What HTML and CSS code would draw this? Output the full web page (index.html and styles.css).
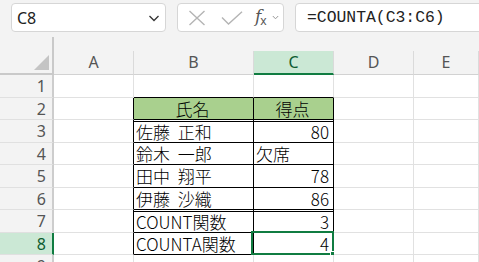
FILE: index.html
```html
<!DOCTYPE html>
<html lang="ja">
<head>
    <meta charset="UTF-8">
    <title>COUNTA</title>
    <link rel="stylesheet" href="styles.css">
</head>
<body>
    <div class="toolbar">
        <div class="namebox">
            <span>C8</span>
            <svg class="chev" width="12" height="8" viewBox="0 0 12 8"><path d="M1.5 2 L6 6.5 L10.5 2" fill="none" stroke="#333" stroke-width="1.3"/></svg>
        </div>
        <div class="fnbox">
            <svg width="18" height="16" viewBox="0 0 18 16"><path d="M1.5 1 L16.5 15 M16.5 1 L1.5 15" fill="none" stroke="#b4b4b4" stroke-width="1.4"/></svg>
            <svg width="22" height="14" viewBox="0 0 22 14"><path d="M1 6.5 L7.5 13 L21 0.8" fill="none" stroke="#b4b4b4" stroke-width="1.4"/></svg>
            <span class="fx"><i>f</i><sub>x</sub></span>
            <svg width="7" height="5" viewBox="0 0 7 5"><path d="M0.8 1 L3.5 3.8 L6.2 1" fill="none" stroke="#999" stroke-width="1"/></svg>
        </div>
        <div class="formula">=COUNTA(C3:C6)</div>
    </div>

    <div class="sheet">
        <div class="corner"></div>
        <div class="col"><span>A</span></div>
        <div class="col"><span>B</span></div>
        <div class="col col-sel"><span>C</span></div>
        <div class="col"><span>D</span></div>
        <div class="col"><span>E</span></div>

        <div class="rh">1</div>
        <div class="c"></div>
        <div class="c top"></div>
        <div class="c top"></div>
        <div class="c"></div>
        <div class="c"></div>

        <div class="rh">2</div>
        <div class="c edge"></div>
        <div class="c t head">氏名</div>
        <div class="c t head">得点</div>
        <div class="c"></div>
        <div class="c"></div>

        <div class="rh">3</div>
        <div class="c edge"></div>
        <div class="c t dbl">佐藤 正和</div>
        <div class="c t dbl num">80</div>
        <div class="c"></div>
        <div class="c"></div>

        <div class="rh">4</div>
        <div class="c edge"></div>
        <div class="c t">鈴木 一郎</div>
        <div class="c t">欠席</div>
        <div class="c"></div>
        <div class="c"></div>

        <div class="rh">5</div>
        <div class="c edge"></div>
        <div class="c t">田中 翔平</div>
        <div class="c t num">78</div>
        <div class="c"></div>
        <div class="c"></div>

        <div class="rh">6</div>
        <div class="c edge"></div>
        <div class="c t">伊藤 沙織</div>
        <div class="c t num">86</div>
        <div class="c"></div>
        <div class="c"></div>

        <div class="rh">7</div>
        <div class="c edge"></div>
        <div class="c t dbl">COUNT関数</div>
        <div class="c t dbl num">3</div>
        <div class="c"></div>
        <div class="c"></div>

        <div class="rh rh-sel">8</div>
        <div class="c edge"></div>
        <div class="c t">COUNTA関数</div>
        <div class="c t num active">4<span class="handle"></span></div>
        <div class="c"></div>
        <div class="c"></div>

        <div class="rh">9</div>
        <div class="c"></div>
        <div class="c"></div>
        <div class="c"></div>
        <div class="c"></div>
        <div class="c"></div>
    </div>
</body>
</html>
```

FILE: styles.css
```css
* {
    margin: 0;
    padding: 0;
    box-sizing: border-box;
}

body {
    background: #f3f3f3;
    font-family: 'Noto Sans', sans-serif;
    overflow: hidden;
    width: 479px;
    height: 262px;
}

/* formula bar */
.toolbar {
    display: flex;
    height: 37px;
    padding: 3px 0 0 11px;
}

.namebox,
.fnbox,
.formula {
    height: 29px;
    background: #fff;
    border: 1px solid #d6d6d6;
    border-radius: 4px;
}

.namebox {
    width: 155px;
    display: flex;
    align-items: center;
    justify-content: space-between;
    padding: 0 5px 0 5px;
    font-size: 16px;
    color: #222;
}

.fnbox {
    width: 107px;
    margin-left: 11px;
    display: flex;
    align-items: center;
    padding-left: 10px;
}

.fnbox svg:nth-child(2) {
    margin-left: 15px;
}

.fx {
    margin-left: 12px;
    font-family: 'DejaVu Serif', serif;
    color: #555;
    font-size: 17px;
    line-height: 1;
}

.fx sub {
    font-family: 'Noto Sans', sans-serif;
    font-size: 12px;
    vertical-align: -3px;
    margin-left: -1px;
}

.fnbox svg:last-child {
    margin-left: 5px;
}

.formula {
    margin-left: 11px;
    margin-right: -20px;
    flex: 1;
    padding-left: 11px;
    font-family: 'Liberation Mono', monospace;
    font-size: 16.4px;
    line-height: 27px;
    color: #222;
}

/* grid */
.sheet {
    display: grid;
    grid-template-columns: 54px 80px 120px 80px 80px 1fr;
    grid-template-rows: 38px 23px 22px 23px 22px 23px 22px 23px 22px 23px;
}

.corner {
    border-right: 2px solid #c9c9c9;
    border-bottom: 2px solid #c9c9c9;
    position: relative;
}

.corner::after {
    content: '';
    position: absolute;
    right: 3px;
    bottom: 3px;
    border-left: 15px solid transparent;
    border-bottom: 15px solid #c4c4c4;
}

.col {
    display: flex;
    align-items: flex-end;
}

.col span {
    flex: 1;
    height: 24px;
    border-right: 1px solid #dadada;
    border-bottom: 1px solid #d2d2d2;
    text-align: center;
    font-size: 16px;
    line-height: 22px;
    color: #555;
}

.col-sel span {
    background: #cbe8d5;
    border-bottom: 2px solid #107c41;
    color: #0e5c30;
}

.rh {
    border-right: 2px solid #cdcdcd;
    border-bottom: 1px solid #e0e0e0;
    text-align: right;
    padding-right: 6px;
    font-size: 16px;
    line-height: 22px;
    color: #555;
}

.rh-sel {
    background: #cbe8d5;
    border-right-color: #107c41;
    color: #0e5c30;
}

.c {
    background: #fff;
    border-right: 1px solid #e1e1e1;
    border-bottom: 1px solid #e1e1e1;
    position: relative;
}

.c.top {
    border-bottom-color: #000;
}

.c.edge {
    border-right-color: #000;
}

.c.t {
    border-right-color: #000;
    border-bottom-color: #000;
    font-family: 'Noto Sans CJK JP', sans-serif;
    font-weight: 300;
    font-size: 17px;
    line-height: 21px;
    word-spacing: 4px;
    padding: 0 4px 0 2px;
    color: #000;
    white-space: nowrap;
}

.c.head {
    background: #a9d08e;
    text-align: center;
}

.c.dbl {
    background: linear-gradient(#fff 1px, #000 1px, #000 2px, #fff 2px);
    padding-top: 1px;
}

.c.num {
    text-align: right;
}

/* active cell */
.active::before {
    content: '';
    position: absolute;
    left: -3px;
    top: -2px;
    right: -1px;
    bottom: -1px;
    border: 2px solid #107c41;
}

.handle {
    position: absolute;
    right: -4px;
    bottom: -4px;
    width: 7px;
    height: 7px;
    background: #107c41;
    border: 1px solid #fff;
}
```
